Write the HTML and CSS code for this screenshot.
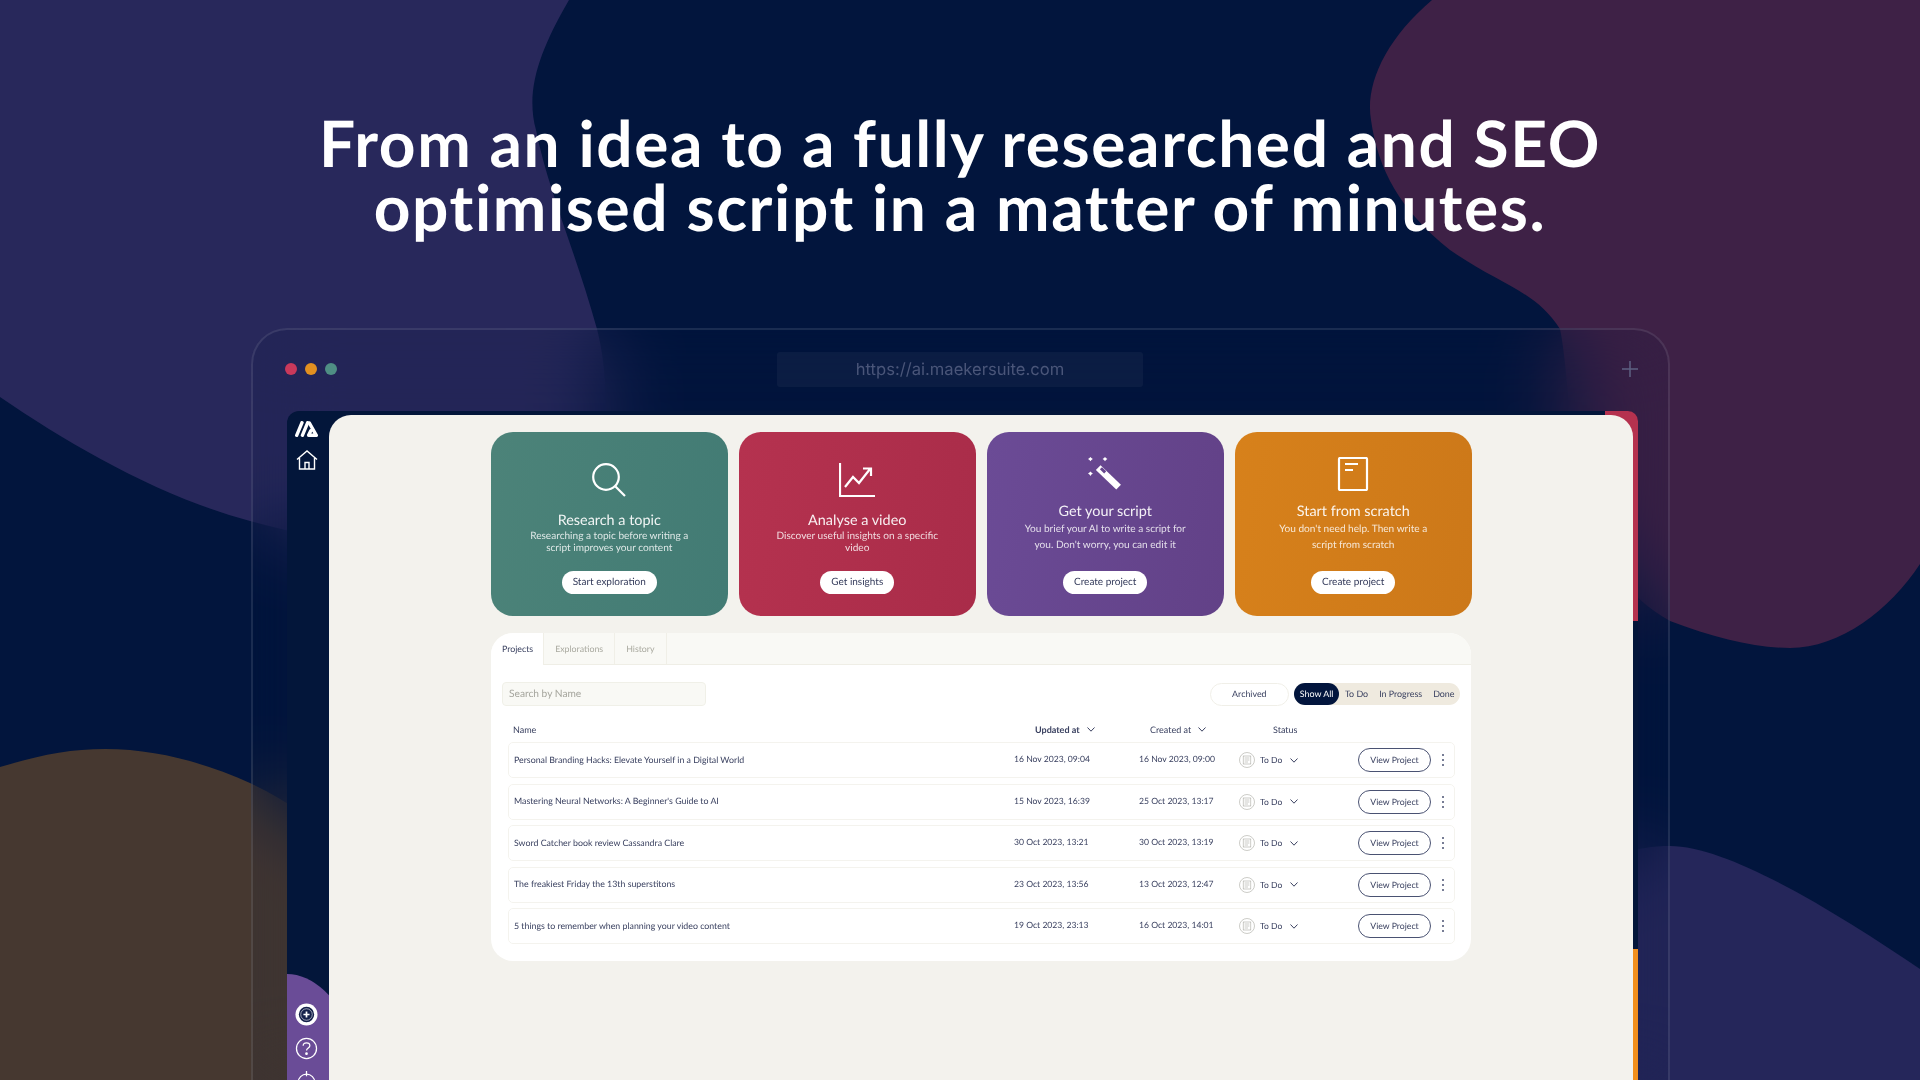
FILE: index.html
```html
<!DOCTYPE html>
<html lang="en">

<head>
    <meta charset="utf-8">
    <meta name="viewport" content="width=device-width, initial-scale=1.0">
    <title>Maekersuite</title>
    <link rel="stylesheet" href="styles.css">
</head>

<body>
    <svg class="blobs" viewBox="0 0 1920 1080" aria-hidden="true">
        <path fill="#28285b" d="M0 0H569C540 50 525 90 536 130C548 190 575 250 597 329C615 400 620 560 450 550C370 548 310 538 250 521C160 497 70 445 0 397Z" />
        <path fill="#3e2146" d="M1432 0C1385 40 1365 85 1371 120C1378 170 1400 210 1450 250C1500 285 1535 290 1560 329C1575 400 1560 560 1670 621C1715 638 1755 648 1790 648C1840 648 1890 610 1920 564V0Z" />
        <path fill="#463830" d="M0 767C40 755 70 749 105 749C160 749 210 765 250 783C330 820 420 900 430 1080H0Z" />
        <path fill="#25265a" d="M1500 1080C1500 950 1560 846 1670 846C1730 846 1840 915 1920 969V1080Z" />
    </svg>

    <h1 class="headline">From an idea to a fully researched and SEO<br>optimised script in a matter of minutes.</h1>

    <div class="browser">
        <div class="browser-bar">
            <div class="lights">
                <span class="light red"></span>
                <span class="light orange"></span>
                <span class="light green"></span>
            </div>
            <div class="url">https://ai.maekersuite.com</div>
            <svg class="plus" viewBox="0 0 16 16"><path d="M8 0V16M0 8H16" /></svg>
        </div>

        <div class="app">
            <span class="strip strip-red"></span>
            <span class="strip strip-orange"></span>

            <aside class="sidebar">
                <svg class="logo" viewBox="0 0 23 16">
                    <path d="M1.7 14.3L7 1.7M7.4 14.3L12.7 1.7" />
                    <path d="M14.4 2L21.3 14.3H13.6L15.8 9.8" />
                </svg>
                <svg class="home" viewBox="0 0 22 20">
                    <path d="M1 9.5L11 1L21 9.5M3.5 8V19H18.5V8M9 19V12.5H13V19" />
                </svg>
                <div class="side-foot">
                    <svg class="side-add" viewBox="0 0 24 24">
                        <circle cx="12" cy="12" r="11.5" fill="#fff" />
                        <circle cx="12" cy="12" r="8" fill="#14204a" />
                        <circle cx="12" cy="12" r="6" fill="none" stroke="#fff" stroke-width=".6" />
                        <path d="M12 8.8V15.2M8.8 12H15.2" stroke="#fff" stroke-width="1.8" />
                    </svg>
                    <svg class="side-help" viewBox="0 0 22 22">
                        <circle cx="11" cy="11" r="9.6" />
                        <path d="M7.8 8.4C7.8 6.5 9.2 5.6 11 5.6C12.8 5.6 14.2 6.7 14.2 8.3C14.2 10.4 11 10.6 11 13" />
                        <circle class="dot" cx="11" cy="16" r=".7" />
                    </svg>
                    <svg class="side-power" viewBox="0 0 22 22">
                        <circle cx="11" cy="11" r="8" />
                        <path d="M11 0V5" />
                    </svg>
                </div>
            </aside>

            <main class="panel">
                <section class="cards">
                    <article class="card teal">
                        <svg class="card-icon" viewBox="0 0 34 34"><circle cx="14" cy="14" r="12.8" /><path d="M23.5 23.5L33 33" /></svg>
                        <h2>Research a topic</h2>
                        <p>Researching a topic before writing a script improves your content</p>
                        <a class="card-btn">Start exploration</a>
                    </article>
                    <article class="card crimson">
                        <svg class="card-icon" viewBox="0 0 36 34"><path d="M1 0V33H36" /><path d="M6 24L14 14L20 20L31 6M24 5.5H32V13" /></svg>
                        <h2>Analyse a video</h2>
                        <p>Discover useful insights on a specific video</p>
                        <a class="card-btn">Get insights</a>
                    </article>
                    <article class="card violet wide">
                        <svg class="card-icon" viewBox="0 0 36 35">
                            <path class="solid" d="M13.4 8.5L34.4 28.5L29.6 33.5L8.6 13.5Z" />
                            <path class="gap" d="M14.9 10.5L19.3 14.7L17.1 16.9L12.7 12.7Z" />
                            <path class="solid" d="M3 0L4 1L5.5 2L4 3L3 4.5L2 3L.5 2L2 1ZM18 0L19 1L20.5 2L19 3L18 4.5L17 3L15.5 2L17 1ZM3 15L4 16L5.5 17L4 18L3 19.5L2 18L.5 17L2 16Z" />
                        </svg>
                        <h2>Get your script</h2>
                        <p>You brief your AI to write a script for you. Don't worry, you can edit it</p>
                        <a class="card-btn">Create project</a>
                    </article>
                    <article class="card amber wide">
                        <svg class="card-icon" viewBox="0 0 30 34">
                            <rect x="1" y="1" width="28" height="32" rx="1" />
                            <path d="M7 7H20M7 13H15" />
                        </svg>
                        <h2>Start from scratch</h2>
                        <p>You don't need help. Then write a script from scratch</p>
                        <a class="card-btn">Create project</a>
                    </article>
                </section>

                <section class="projects">
                    <nav class="tabs">
                        <a class="tab active">Projects</a>
                        <a class="tab">Explorations</a>
                        <a class="tab">History</a>
                    </nav>

                    <div class="tools">
                        <div class="search">Search by Name</div>
                        <div class="tools-right">
                            <a class="archived">Archived</a>
                            <div class="filters">
                                <a class="filter active">Show All</a>
                                <a class="filter">To Do</a>
                                <a class="filter">In Progress</a>
                                <a class="filter">Done</a>
                            </div>
                        </div>
                    </div>

                    <div class="table-head">
                        <span>Name</span>
                        <span class="head-updated"><b>Updated at</b><svg class="chev" viewBox="0 0 8 5"><path d="M.5 .5L4 4.2L7.5 .5" /></svg></span>
                        <span class="head-created">Created at<svg class="chev" viewBox="0 0 8 5"><path d="M.5 .5L4 4.2L7.5 .5" /></svg></span>
                        <span class="head-status">Status</span>
                    </div>

                    <div id="rows"></div>
                </section>
            </main>
        </div>
    </div>

    <template>
        <div class="row">
            <span class="row-name"></span>
            <span class="row-updated"></span>
            <span class="row-created"></span>
            <span class="row-status">
                <svg class="status-icon" viewBox="0 0 16 16">
                    <circle cx="8" cy="8" r="7.5" />
                    <rect x="4.2" y="4" width="7.6" height="8" />
                    <path d="M5.6 6H10.4M5.6 8H10.4M5.6 10H9" />
                </svg>
                To Do
                <svg class="chev chev-status" viewBox="0 0 8 5"><path d="M.5 .5L4 4.2L7.5 .5" /></svg>
            </span>
            <a class="view-btn">View Project</a>
            <span class="dots"><i></i><i></i><i></i></span>
        </div>
    </template>

    <script>
        const projekter = [
            ["Personal Branding Hacks: Elevate Yourself in a Digital World", "16 Nov 2023, 09:04", "16 Nov 2023, 09:00"],
            ["Mastering Neural Networks: A Beginner's Guide to AI", "15 Nov 2023, 16:39", "25 Oct 2023, 13:17"],
            ["Sword Catcher book review Cassandra Clare", "30 Oct 2023, 13:21", "30 Oct 2023, 13:19"],
            ["The freakiest Friday the 13th superstitons", "23 Oct 2023, 13:56", "13 Oct 2023, 12:47"],
            ["5 things to remember when planning your video content", "19 Oct 2023, 23:13", "16 Oct 2023, 14:01"]
        ];
        const rows = document.querySelector("#rows");
        const rowTemplate = document.querySelector("template");
        projekter.forEach(projekt => {
            const klon = rowTemplate.content.cloneNode(true);
            klon.querySelector(".row-name").textContent = projekt[0];
            klon.querySelector(".row-updated").textContent = projekt[1];
            klon.querySelector(".row-created").textContent = projekt[2];
            rows.appendChild(klon);
        });
    </script>
</body>

</html>
```

FILE: styles.css
```css
* {
    box-sizing: border-box;
    margin: 0;
    padding: 0;
}

html,
body {
    height: 1080px;
    overflow: hidden;
}

body {
    position: relative;
    background-color: #02153d;
    font-family: "Lato", "Noto Sans", sans-serif;
    color: #3a4160;
    text-rendering: geometricPrecision;
}

.blobs {
    position: absolute;
    left: 0;
    top: 0;
    width: 1920px;
    height: 1080px;
}

.headline {
    position: relative;
    padding-top: 111px;
    height: 328px;
    text-align: center;
    font-size: 64px;
    line-height: 64px;
    letter-spacing: 1.6px;
    font-weight: 700;
    color: #fff;
}

/* browser frame */
.browser {
    position: relative;
    margin: 0 250px 0 251px;
    height: 800px;
    padding: 0 30px 0 34px;
    border: 2px solid rgba(255, 255, 255, 0.1);
    border-bottom: 0;
    border-radius: 36px 36px 0 0;
    background-color: rgba(2, 21, 61, 0.1);
    backdrop-filter: blur(40px);
}

.browser-bar {
    display: grid;
    grid-template-columns: 490px 366px 1fr;
    align-items: center;
    height: 81px;
    padding-bottom: 3px;
}

.lights {
    display: flex;
    gap: 8px;
    margin-left: -2px;
}

.light {
    width: 12px;
    height: 12px;
    border-radius: 50%;
}

.red {
    background-color: #c9395b;
}

.orange {
    background-color: #e29020;
}

.green {
    background-color: #4f8f84;
}

.url {
    height: 35px;
    line-height: 37px;
    text-align: center;
    border-radius: 3px;
    background-color: rgba(255, 255, 255, 0.04);
    font-family: "Inter", sans-serif;
    font-size: 16.6px;
    color: #4a5679;
}

.plus {
    justify-self: end;
    width: 16px;
    height: 16px;
    fill: none;
    stroke: #5d6182;
    stroke-width: 1.5;
}

/* app */
.app {
    position: relative;
    display: flex;
    height: 720px;
    padding-top: 4px;
    padding-right: 5px;
    border-radius: 12px 12px 0 0;
    background-color: #03163a;
}

.strip {
    position: absolute;
    right: 0;
    width: 33px;
}

.strip-red {
    top: 0;
    height: 210px;
    background-color: #b5324f;
    border-radius: 0 10px 0 0;
}

.strip-orange {
    top: 538px;
    bottom: 0;
    background-color: #f28f1c;
}

.sidebar {
    position: relative;
    flex: 0 0 42px;
    display: flex;
    flex-direction: column;
    align-items: center;
    padding-right: 3px;
}

.logo {
    width: 23px;
    height: 16px;
    margin-top: 6px;
    fill: none;
    stroke: #fff;
    stroke-width: 3.4;
    stroke-linecap: round;
    stroke-linejoin: round;
}

.home {
    width: 22px;
    height: 20px;
    margin-top: 13px;
    fill: none;
    stroke: #fff;
    stroke-width: 1.4;
}

.side-foot {
    position: absolute;
    top: 559px;
    left: 0;
    right: 0;
    bottom: 0;
    display: flex;
    flex-direction: column;
    align-items: center;
    gap: 11px;
    padding: 29px 3px 0 0;
    background-color: #6a4c97;
    clip-path: ellipse(98px 220px at 0 220px);
}

.side-add {
    width: 23px;
    height: 23px;
    flex: none;
}

.side-help,
.side-power {
    width: 23px;
    height: 23px;
    flex: none;
    fill: none;
    stroke: #fff;
    stroke-width: 1.2;
}

.side-help .dot {
    fill: #fff;
}

.panel {
    position: relative;
    flex: 1;
    padding: 17px 0 0 162px;
    border-radius: 22px 22px 0 0;
    background-color: #f3f2ed;
}

/* cards */
.cards {
    display: grid;
    grid-template-columns: repeat(4, 236.5px);
    column-gap: 11.5px;
}

.card {
    display: flex;
    flex-direction: column;
    align-items: center;
    height: 184px;
    padding-top: 31px;
    border-radius: 22px;
    text-align: center;
    color: #fff;
}

.teal {
    background: linear-gradient(100deg, #4c8379, #427b74);
}

.crimson {
    background: linear-gradient(100deg, #b5324f, #a92c49);
}

.violet {
    background: linear-gradient(100deg, #6b4b96, #624187);
}

.amber {
    background: linear-gradient(100deg, #d7811b, #cc7819);
}

.card-icon {
    width: 36px;
    height: 34px;
    flex: none;
    fill: none;
    stroke: #fff;
    stroke-width: 2.2;
}

.card-icon .solid {
    fill: #fff;
    stroke: none;
}

.card-icon .gap {
    fill: #67478f;
    stroke: none;
}

.card h2 {
    margin-top: 15px;
    font-size: 14.4px;
    line-height: 17px;
    font-weight: 400;
    color: rgba(255, 255, 255, 0.92);
}

.card p {
    width: 170px;
    margin-top: 1px;
    height: 38px;
    font-size: 10.1px;
    line-height: 12px;
    color: rgba(255, 255, 255, 0.82);
}

.card-btn {
    margin-top: 3px;
    padding: 0 11px;
    height: 23px;
    line-height: 23px;
    border-radius: 12px;
    background-color: #fff;
    font-size: 10px;
    color: #333a5a;
}

.wide {
    padding-top: 25px;
}

.wide h2 {
    margin-top: 12px;
}

.wide p {
    width: 166px;
    margin-top: 2px;
    height: 46px;
    line-height: 15.5px;
}

/* projects table */
.projects {
    height: 328px;
    margin-top: 17px;
    width: 980px;
    border-radius: 22px;
    background-color: #fff;
    overflow: hidden;
}

.tabs {
    display: flex;
    height: 32px;
    background-color: #f9f9f5;
    border-bottom: 1px solid #efeee6;
}

.tab {
    display: block;
    padding: 0 11px;
    line-height: 31px;
    font-size: 8.8px;
    color: #a9a99f;
    border-right: 1px solid #f0efe7;
}

.tab.active {
    padding: 0 10px 0 11px;
    background-color: #fff;
    color: #3a4160;
    height: 32px;
}

.tools {
    display: flex;
    justify-content: space-between;
    padding: 17px 11px 0 11px;
}

.search {
    width: 204px;
    height: 24px;
    padding-left: 6px;
    line-height: 22px;
    border: 1px solid #f0f0e8;
    border-radius: 4px;
    background-color: #f9f9f5;
    font-size: 10.2px;
    color: #a5a59d;
}

.tools-right {
    display: flex;
    gap: 5px;
    margin-top: 1px;
}

.archived {
    width: 79px;
    height: 23px;
    line-height: 20px;
    text-align: center;
    border: 1px solid #f0efe8;
    border-radius: 12px;
    font-size: 8.9px;
}

.filters {
    display: flex;
    height: 22px;
    border-radius: 11px;
    background-color: #efeadf;
}

.filter {
    padding: 0 5.5px;
    line-height: 22px;
    border-radius: 11px;
    font-size: 8.9px;
}

.filter.active {
    padding: 0 6px;
    background-color: #02153d;
    color: #fff;
}

.table-head,
.row {
    display: grid;
    grid-template-columns: 500px 125px 100px 119px 73px 1fr;
    align-items: center;
}

.table-head {
    margin: 13px 16px 0 22px;
    height: 20px;
    font-size: 9px;
}

.head-updated {
    display: flex;
    align-items: center;
    padding-left: 22px;
    white-space: nowrap;
}

.head-created {
    display: flex;
    align-items: center;
    padding-left: 12px;
    white-space: nowrap;
}

.head-status {
    padding-left: 35px;
}

.chev {
    width: 8px;
    height: 5px;
    margin-left: 7px;
    fill: none;
    stroke: #3a4160;
    stroke-width: 1;
}

#rows {
    display: flex;
    flex-direction: column;
    gap: 5.5px;
    margin: 3px 16px 0 17px;
}

.row {
    height: 36px;
    padding-left: 5px;
    border: 1px solid #f4f3ee;
    border-radius: 5px;
    font-size: 8.8px;
}

.row-name,
.row-updated,
.row-created {
    padding-bottom: 2px;
    white-space: nowrap;
}

.row-updated,
.row-created {
    font-size: 8.6px;
}

.row-status {
    display: flex;
    align-items: center;
    font-size: 8.5px;
}

.status-icon {
    width: 16px;
    height: 16px;
    margin-right: 5px;
    fill: none;
    stroke: #a9a9a1;
    stroke-width: .6;
}

.chev-status {
    margin-left: 8px;
}

.view-btn {
    height: 24px;
    line-height: 22px;
    text-align: center;
    border: 1px solid #4a5272;
    border-radius: 12px;
    font-size: 8.7px;
}

.dots {
    display: flex;
    flex-direction: column;
    align-items: center;
    gap: 3px;
}

.dots i {
    width: 2px;
    height: 2px;
    border-radius: 50%;
    background-color: #4a5272;
}
```
